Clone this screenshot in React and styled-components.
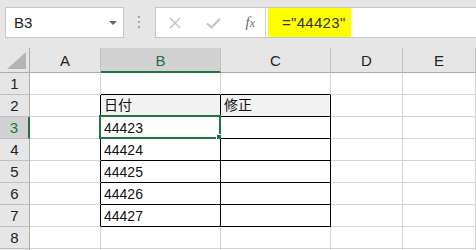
import styled, { createGlobalStyle } from 'styled-components';

const GREEN = '#217346';
const GRID = '#d4d4d4';

const columns = ['A', 'B', 'C', 'D', 'E', ''];
const widths = [30, 71, 120, 110, 72, 73];

const table = {
  2: ['日付', '修正'],
  3: ['44423', ''],
  4: ['44424', ''],
  5: ['44425', ''],
  6: ['44426', ''],
  7: ['44427', ''],
};

const GlobalStyle = createGlobalStyle`
  html, body {
    margin: 0;
    padding: 0;
    background: #fff;
    overflow: hidden;
  }
  body {
    font-family: "Liberation Sans", "Noto Sans CJK JP", sans-serif;
  }
`;

const App = () => {
  // row 9 is only a 1px sliver at the bottom edge, so no label for it
  const rows = [1, 2, 3, 4, 5, 6, 7, 8, 9];

  // black outline around B2:C7
  const isTable = (r, c) => r >= 2 && r <= 7 && (c === 1 || c === 2);

  return (
    <>
      <GlobalStyle />
      <Window>
        <FormulaBar>
          <NameBox>
            <NameText>B3</NameText>
            <Caret />
          </NameBox>
          <Grip>
            <svg width='3' height='13' viewBox='0 0 3 13'>
              <rect x='0' y='0' width='2' height='2' fill='#a6a6a6' />
              <rect x='0' y='5' width='2' height='2' fill='#a6a6a6' />
              <rect x='0' y='10' width='2' height='2' fill='#a6a6a6' />
            </svg>
          </Grip>
          <FormulaBox>
            <FxButtons>
              <svg width='12' height='12' viewBox='0 0 12 12'>
                <path d='M1 1 L11 11 M11 1 L1 11' stroke='#c2c2c2' strokeWidth='1.4' fill='none' />
              </svg>
              <svg width='15' height='12' viewBox='0 0 15 12'>
                <path d='M1 6.5 L5.5 10.5 L14 1.5' stroke='#c2c2c2' strokeWidth='2' fill='none' />
              </svg>
              <Fx>
                f<small>x</small>
              </Fx>
            </FxButtons>
            <FormulaInput>
              <Marked>="44423"</Marked>
            </FormulaInput>
          </FormulaBox>
        </FormulaBar>

        <Sheet>
          <Corner>
            <svg width='19' height='17' viewBox='0 0 19 17'>
              <polygon points='19,0 19,17 0,17' fill='#b4b4b4' />
            </svg>
          </Corner>
          {columns.map((col, i) => (
            <ColHead key={col + i} $active={col === 'B'}>
              {col}
            </ColHead>
          ))}

          {rows.map((r) => (
            <Row key={r}>
              <RowHead $active={r === 3}>{r < 9 ? r : ''}</RowHead>
              {columns.map((col, c) => {
                const inside = isTable(r, c);
                const blackRight = inside || (c === 0 && r >= 2 && r <= 7);
                const aboveTable = r === 1 && (c === 1 || c === 2);
                const value = table[r] && (c === 1 || c === 2) ? table[r][c - 1] : '';
                return (
                  <Cell
                    key={col + c}
                    $black={blackRight}
                    $blackBottom={inside || aboveTable}
                    $head={r === 2 && inside}
                  >
                    {value}
                    {r === 3 && c === 1 && (
                      <Selection>
                        <FillHandle />
                      </Selection>
                    )}
                  </Cell>
                );
              })}
            </Row>
          ))}
        </Sheet>
      </Window>
    </>
  );
};

export default App;

const Window = styled.div`
  width: 476px;
  height: 250px;
  overflow: hidden;
  background: #fff;
`;

const FormulaBar = styled.div`
  height: 48px;
  box-sizing: border-box;
  padding: 7px 0 0 5px;
  background: #e6e6e6;
  display: flex;
  align-items: flex-start;
`;

const NameBox = styled.div`
  width: 119px;
  height: 31px;
  box-sizing: border-box;
  border: 1px solid #c6c6c6;
  background: #fff;
  display: flex;
  align-items: center;
  justify-content: space-between;
  padding: 0 6px 0 8px;
`;

const NameText = styled.span`
  font-size: 15px;
  color: #222;
`;

const Caret = styled.span`
  width: 0;
  height: 0;
  border-left: 4px solid transparent;
  border-right: 4px solid transparent;
  border-top: 4px solid #666;
`;

const Grip = styled.div`
  width: 31px;
  height: 31px;
  display: flex;
  align-items: center;
  justify-content: center;
`;

const FormulaBox = styled.div`
  flex: 1;
  height: 31px;
  box-sizing: border-box;
  border: 1px solid #c6c6c6;
  border-right: none;
  background: #fff;
  display: flex;
`;

const FxButtons = styled.div`
  width: 110px;
  box-sizing: border-box;
  border-right: 1px solid #d0d0d0;
  display: flex;
  align-items: center;
  justify-content: space-between;
  padding: 0 10px 0 13px;
`;

const Fx = styled.span`
  font-family: "Liberation Serif", serif;
  font-style: italic;
  font-size: 15px;
  color: #6a6a6a;

  small {
    font-size: 12px;
  }
`;

const FormulaInput = styled.div`
  flex: 1;
  padding-left: 2px;
  display: flex;
`;

const Marked = styled.span`
  width: 83px;
  box-sizing: border-box;
  background: #ffff00;
  padding-left: 14px;
  display: flex;
  align-items: center;
  font-size: 15px;
  letter-spacing: 0.3px;
  color: #333;
`;

const Sheet = styled.div`
  display: grid;
  grid-template-columns: ${widths.map((w) => w + 'px').join(' ')} 1fr;
  grid-auto-rows: 22px;
  grid-template-rows: 25px;
`;

const Row = styled.div`
  display: contents;
`;

const Corner = styled.div`
  background: #e6e6e6;
  border-right: 1px solid #ababab;
  border-bottom: 1px solid #ababab;
  display: flex;
  align-items: flex-end;
  justify-content: flex-end;
  padding: 0 3px 3px 0;
`;

const ColHead = styled.div`
  box-sizing: border-box;
  background: ${(p) => (p.$active ? '#d2d2d2' : '#e6e6e6')};
  border-right: 1px solid #c0c0c0;
  border-bottom: ${(p) => (p.$active ? `2px solid ${GREEN}` : '1px solid #ababab')};
  color: ${(p) => (p.$active ? GREEN : '#222')};
  font-size: 15px;
  display: flex;
  align-items: center;
  justify-content: center;
  padding-top: ${(p) => (p.$active ? '1px' : '0')};
`;

const RowHead = styled.div`
  box-sizing: border-box;
  background: ${(p) => (p.$active ? '#d2d2d2' : '#e6e6e6')};
  border-right: ${(p) => (p.$active ? `2px solid ${GREEN}` : '1px solid #ababab')};
  border-bottom: 1px solid #c0c0c0;
  color: ${(p) => (p.$active ? GREEN : '#222')};
  font-size: 15px;
  display: flex;
  align-items: center;
  justify-content: center;
`;

const Cell = styled.div`
  position: relative;
  box-sizing: border-box;
  border-right: 1px solid ${(p) => (p.$black ? '#000' : GRID)};
  border-bottom: 1px solid ${(p) => (p.$blackBottom ? '#000' : GRID)};
  background: ${(p) => (p.$head ? '#f2f2f2' : '#fff')};
  font-size: 14px;
  color: #111;
  padding: 0 0 2px 3px;
  display: flex;
  align-items: flex-end;
  white-space: nowrap;
`;

const Selection = styled.div`
  position: absolute;
  top: -2px;
  left: -2px;
  width: 122px;
  height: 24px;
  box-sizing: border-box;
  border: 2px solid ${GREEN};
  pointer-events: none;
`;

const FillHandle = styled.div`
  position: absolute;
  right: -4px;
  bottom: -4px;
  width: 5px;
  height: 5px;
  background: ${GREEN};
  border: 1px solid #fff;
`;
